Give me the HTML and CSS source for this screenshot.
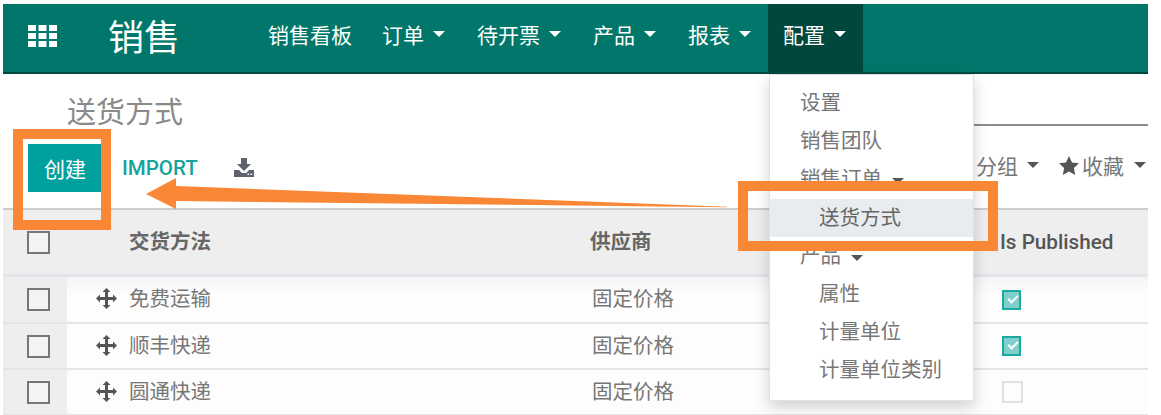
FILE: index.html
```html
<!DOCTYPE html>
<html lang="zh">
<head>
<meta charset="utf-8">
<title>送货方式</title>
<link rel="stylesheet" href="styles.css">
</head>
<body>
<div class="app">
  <nav class="navbar">
    <svg class="apps" width="29" height="22" viewBox="0 0 29 22"><g fill="#fff"><rect x="0" y="0" width="8" height="6"/><rect x="10.500" y="0" width="8" height="6"/><rect x="21" y="0" width="8" height="6"/><rect x="0" y="8" width="8" height="6"/><rect x="10.500" y="8" width="8" height="6"/><rect x="21" y="8" width="8" height="6"/><rect x="0" y="16" width="8" height="6"/><rect x="10.500" y="16" width="8" height="6"/><rect x="21" y="16" width="8" height="6"/></g></svg>
    <span class="brand">销售</span>
    <ul class="menu">
      <li class="menu-item">销售看板</li>
      <li class="menu-item">订单<i class="caret"></i></li>
      <li class="menu-item">待开票<i class="caret"></i></li>
      <li class="menu-item">产品<i class="caret"></i></li>
      <li class="menu-item">报表<i class="caret"></i></li>
      <li class="menu-item active">配置<i class="caret"></i></li>
    </ul>
  </nav>

  <header class="title-row">
    <h1 class="title">送货方式</h1>
    <div class="search"></div>
  </header>

  <div class="toolbar">
    <button class="btn-create">创建</button>
    <span class="btn-import">IMPORT</span>
    <svg class="download" width="20" height="19" viewBox="0 0 20 19"><path fill="#5f636e" d="M7 0h6v6h4l-7 7-7-7h4z"/><path fill="#5f636e" d="M0 12h5l3 3h4l3-3h5v7H0z"/><g fill="#fff"><rect x="13.500" y="15.500" width="1.500" height="1.500"/><rect x="16.500" y="15.500" width="1.500" height="1.500"/></g></svg>
    <div class="filters">
      <span class="filter">分组<i class="caret caret-dark"></i></span>
      <span class="filter"><svg class="star" width="20" height="19" viewBox="0 0 20 19"><polygon fill="#555" points="10,0 13,6.400 20,7.300 14.900,12 16.200,19 10,15.600 3.800,19 5.100,12 0,7.300 7,6.400"/></svg>收藏<i class="caret caret-dark caret-wide"></i></span>
    </div>
  </div>

  <div class="table">
    <div class="row head">
      <div class="cell-check"><i class="box"></i></div>
      <div class="th th-name">交货方法</div>
      <div class="th">供应商</div>
      <div class="th th-pub">Is Published</div>
    </div>
    <div class="row body-row first">
      <div class="cell-check"><i class="box"></i></div>
      <div class="td td-name"><svg class="move" width="21" height="21" viewBox="0 0 21 21"><path fill="#555" d="M10.500 0l4 4h-2.500v5h5V6.500l4 4-4 4V12h-5v5h2.500l-4 4-4-4H9v-5H4v2.500l-4-4 4-4V9h5V4H6.500z"/></svg>免费运输</div>
      <div class="td">固定价格</div>
      <div class="td-pub"><i class="pub on"></i></div>
    </div>
    <div class="row body-row">
      <div class="cell-check"><i class="box"></i></div>
      <div class="td td-name"><svg class="move" width="21" height="21" viewBox="0 0 21 21"><path fill="#555" d="M10.500 0l4 4h-2.500v5h5V6.500l4 4-4 4V12h-5v5h2.500l-4 4-4-4H9v-5H4v2.500l-4-4 4-4V9h5V4H6.500z"/></svg>顺丰快递</div>
      <div class="td">固定价格</div>
      <div class="td-pub"><i class="pub on"></i></div>
    </div>
    <div class="row body-row">
      <div class="cell-check"><i class="box"></i></div>
      <div class="td td-name"><svg class="move" width="21" height="21" viewBox="0 0 21 21"><path fill="#555" d="M10.500 0l4 4h-2.500v5h5V6.500l4 4-4 4V12h-5v5h2.500l-4 4-4-4H9v-5H4v2.500l-4-4 4-4V9h5V4H6.500z"/></svg>圆通快递</div>
      <div class="td">固定价格</div>
      <div class="td-pub"><i class="pub off"></i></div>
    </div>
  </div>
</div>

<div class="dropdown">
  <div class="dd-item">设置</div>
  <div class="dd-item">销售团队</div>
  <div class="dd-item">销售订单<i class="caret caret-small"></i></div>
  <div class="dd-item sub selected">送货方式</div>
  <div class="dd-item">产品<i class="caret caret-small"></i></div>
  <div class="dd-item sub">属性</div>
  <div class="dd-item sub">计量单位</div>
  <div class="dd-item sub">计量单位类别</div>
</div>

<div class="mark mark-create"></div>
<div class="mark mark-menu"></div>
<svg class="arrow" width="600" height="40" viewBox="0 0 600 40"><polygon fill="#f98736" points="0,16 30,0 30,8 581,28.800 581,29.200 30,23 30,31"/></svg>
</body>
</html>
```
FILE: styles.css
```css
* { box-sizing: border-box; }
html, body { margin: 0; height: 415px; overflow: hidden; background: #fff; }
body { font-family: Roboto, "Noto Sans CJK SC", sans-serif; color: #666; position: relative; }
.app { width: 1145px; margin-left: 3px; padding-top: 4px; }

.navbar { height: 70px; background: #00776a; border-bottom: 2px solid #00483f; display: flex; align-items: center; color: #fff; }
.apps { margin-left: 25px; margin-bottom: 5px; }
.brand { font-size: 36px; line-height: 46px; margin-left: 51px; margin-bottom: -2px; }
.menu { list-style: none; margin: 0 0 0 73px; padding: 0; display: flex; height: 68px; }
.menu-item { font-size: 21px; padding: 0 15px; display: flex; align-items: center; height: 68px; padding-bottom: 9px; }
.menu-item.active { background: #00473e; }
.caret { width: 0; height: 0; border-left: 6px solid transparent; border-right: 6px solid transparent; border-top: 6px solid #fff; margin-left: 9px; margin-right: 2px; display: inline-block; }
.caret-dark { border-top-color: #555; }
.caret-wide { margin-left: 10px; }
.caret-small { border-top-color: #555; margin-left: 10px; vertical-align: middle; }

.title-row { height: 52px; display: flex; justify-content: space-between; align-items: flex-start; }
.title { margin: 20px 0 0 64px; font-size: 29px; line-height: 38px; font-weight: 400; color: #8a8a8a; }
.search { width: 300px; height: 52px; border-bottom: 2px solid #8c8c8c; }

.toolbar { height: 82px; padding: 18px 0 0 25px; display: flex; align-items: flex-start; }
.btn-create { width: 74px; height: 48px; border: 0; padding: 0; background: #00a09d; color: #fff; font: inherit; font-size: 21px; }
.btn-import { margin-left: 20px; font-size: 20.500px; font-weight: 500; line-height: 48px; color: #16a3a0; }
.download { margin: 14px 0 0 36px; }
.filters { margin-left: auto; display: flex; gap: 18px; height: 42px; align-items: center; font-size: 21px; color: #777; }
.filter { display: flex; align-items: center; }
.star { margin-right: 3px; }

.row { display: grid; grid-template-columns: 64px 523px 411px 1fr; align-items: center; }
.head { height: 69px; background: #eee; border-top: 2px solid #ccc; border-bottom: 3px solid #e2e6ea; }
.body-row { height: 46px; background: #fdfdfd; border-bottom: 2px solid #e2e6ea; }
.first { height: 47px; background: linear-gradient(#f5f5f5, #fdfdfd 40%); }
.cell-check { height: 100%; display: flex; align-items: center; padding-left: 24px; background: #eee; }
.box { width: 23px; height: 23px; border: 2px solid #777; background: #f3f3f3; display: block; }
.th { font-size: 20.500px; font-weight: 700; color: #666; padding-bottom: 4px; }
.th-name { padding-left: 62px; }
.th-pub { font-size: 20.700px; font-weight: 500; color: #555; padding-bottom: 0; margin-left: -1px; }
.td { font-size: 20.500px; color: #777; padding-left: 2px; padding-bottom: 5px; }
.td-name { padding-left: 29px; display: flex; align-items: center; }
.td-pub { padding-left: 1px; }
.move { margin-right: 12px; margin-top: 3px; }
.pub { display: block; width: 19px; height: 20px; }
.pub.on { border: 2px solid #1ea8a2; background: #7fcfca; position: relative; }
.pub.on::after { content: ""; position: absolute; left: 4px; top: 3px; width: 8px; height: 4px; border-left: 2px solid #fff; border-bottom: 2px solid #fff; transform: rotate(-45deg); }
.pub.off { width: 21px; height: 22px; border: 2px solid #e0e0e0; background: #fdfdfd; }

.dropdown { position: absolute; left: 769px; top: 74px; width: 205px; height: 327px; padding-top: 9px; background: #fff; border: 1px solid #dfe3e7; box-shadow: 0 6px 14px rgba(0, 0, 0, .18); }
.dd-item { height: 38px; line-height: 38px; padding-left: 30px; font-size: 20.500px; color: #777; }
.dd-item.sub { padding-left: 49px; }
.dd-item.selected { margin-top: 1px; background: #e9ecef; color: #666; }

.mark { position: absolute; border: 10px solid #f98736; }
.mark-create { left: 13px; top: 129px; width: 98px; height: 101px; }
.mark-menu { left: 738px; top: 181px; width: 260px; height: 70px; }
.arrow { position: absolute; left: 146px; top: 178px; }
```
